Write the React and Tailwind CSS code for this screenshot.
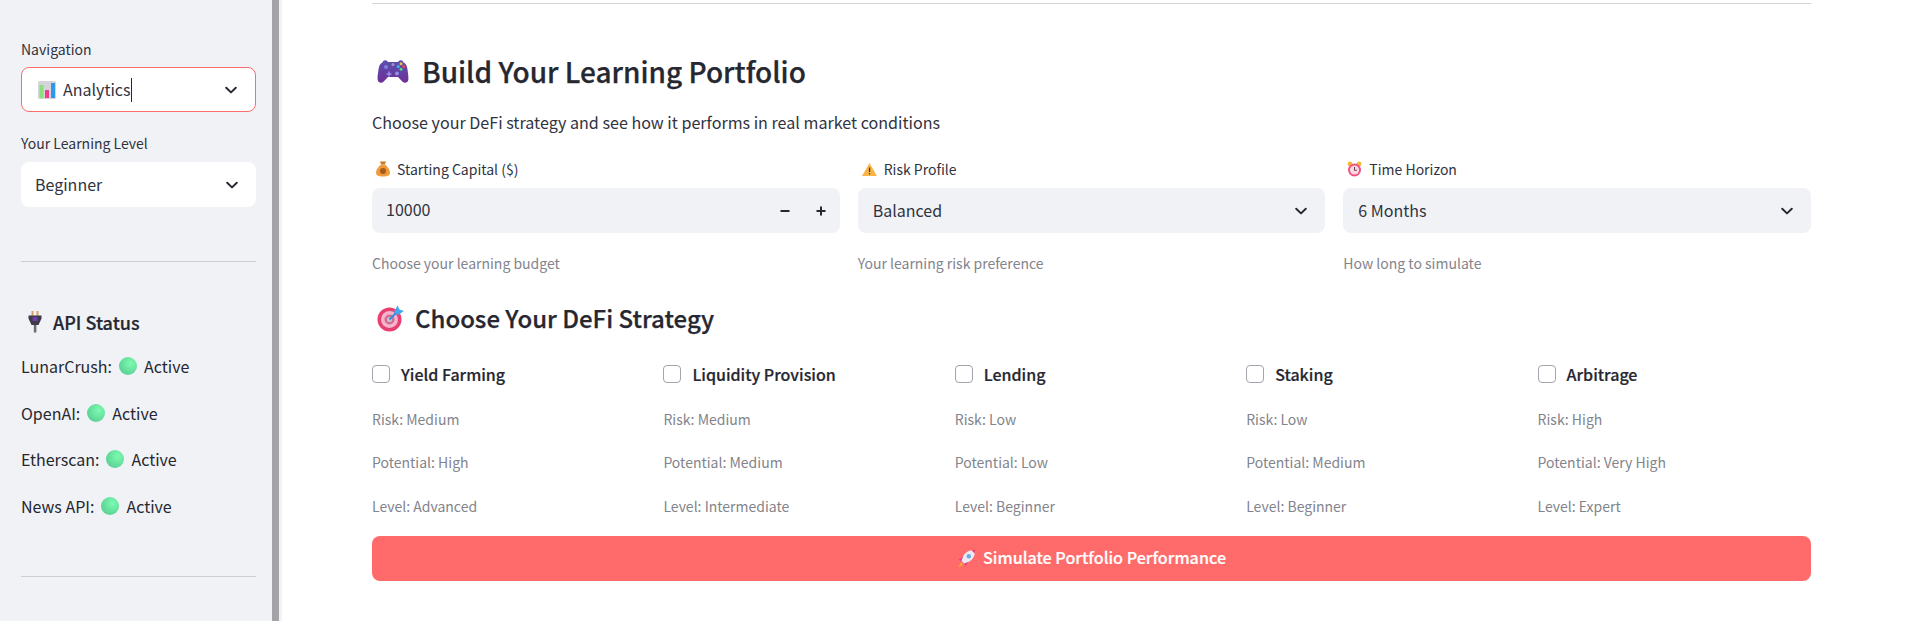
import React from 'react';

const FONT = '"Noto Sans CJK JP", "Noto Sans", sans-serif';

const Chevron = () => (
  <svg width="16" height="16" viewBox="0 0 16 16" fill="none" stroke="#262730" strokeWidth="2" strokeLinecap="round" strokeLinejoin="round">
    <path d="M3.2 5.8 8 10.400l4.800-4.600" />
  </svg>
);

const BarChart = () => (
  <svg width="18" height="18" viewBox="0 0 18 18" className="shrink-0">
    <rect x="0" y="0" width="18" height="18" rx="1.500" fill="#d4d4da" />
    <rect x="1.500" y="4" width="4" height="13" fill="#8ce07c" />
    <rect x="7" y="9" width="4" height="8" fill="#ef3d8c" />
    <rect x="13" y="2" width="4" height="15" fill="#2f96ea" />
  </svg>
);

const Plug = () => (
  <svg width="16" height="22" viewBox="0 0 16 22" className="shrink-0">
    <rect x="4.500" y="0" width="2" height="5" fill="#d9a066" />
    <rect x="9.500" y="0" width="2" height="5" fill="#d9a066" />
    <path d="M1.500 4.500h13v3l-3 6.500h-7l-3-6.500z" fill="#3f3a4a" />
    <rect x="5.500" y="6" width="5" height="4" fill="#6b3fa8" />
    <rect x="6.800" y="14" width="2.600" height="7.500" fill="#6d6d7a" />
  </svg>
);

const GreenDot = () => (
  <span className="block w-[18px] h-[18px] rounded-full shrink-0 bg-[radial-gradient(circle_at_65%_35%,#7dfbb0,#4fc48c)]" />
);

const Gamepad = () => (
  <svg width="32" height="25" viewBox="0 0 32 25" className="shrink-0">
    <defs>
      <linearGradient id="pad" x1="0" y1="0" x2="0" y2="1">
        <stop offset="0" stopColor="#5a4fb0" />
        <stop offset="1" stopColor="#6f2f96" />
      </linearGradient>
    </defs>
    <path d="M5.500 3.500C6 1 9.500.5 11 3h10c1.500-2.500 5-2 5.500.5 2.500 1 3.500 3.500 4 7 .5 4 1.300 8 .8 10.500-.6 3-4 3.500-6 1.500L21 18H11l-4.300 4.500c-2 2-5.400 1.500-6-1.500-.5-2.500.3-6.500.8-10.500.5-3.500 1.500-6 4-7z" fill="url(#pad)" />
    <circle cx="9" cy="8" r="2" fill="#7f7fdc" />
    <circle cx="16" cy="5.500" r="1.500" fill="#9a9ab8" />
    <path d="M12 12.500v5M9.500 15h5" stroke="#8f8fe8" strokeWidth="1.600" />
    <circle cx="24" cy="4.800" r="1.500" fill="#f4c430" />
    <circle cx="26.800" cy="7.500" r="1.500" fill="#ef4444" />
    <circle cx="21.200" cy="7.500" r="1.500" fill="#38b6ef" />
    <circle cx="24" cy="10.200" r="1.500" fill="#4ade80" />
    <circle cx="20" cy="14.500" r="2" fill="#8f8fe8" />
  </svg>
);

const MoneyBag = () => (
  <svg width="14" height="16" viewBox="0 0 14 16" className="shrink-0">
    <path d="M4 .5h6L8.800 3.500H5.200z" fill="#c57a2c" />
    <path d="M5 3.500h4c2.500 2 5 5 5 8 0 3-2.500 4-7 4s-7-1-7-4c0-3 2.500-6 5-8z" fill="#ef9b3a" />
    <circle cx="7" cy="10" r="3" fill="#a65a20" />
  </svg>
);

const Warning = () => (
  <svg width="15" height="13" viewBox="0 0 15 13" className="shrink-0">
    <path d="M7.500 0 15 13H0z" fill="#fbb545" />
    <rect x="6.900" y="4.500" width="1.300" height="4.500" fill="#4a3a20" />
    <rect x="6.900" y="10" width="1.300" height="1.400" fill="#4a3a20" />
  </svg>
);

const Clock = () => (
  <svg width="15" height="16" viewBox="0 0 15 16" className="shrink-0">
    <circle cx="3" cy="3" r="2.400" fill="#f4b93c" />
    <circle cx="12" cy="3" r="2.400" fill="#f4b93c" />
    <circle cx="7.500" cy="9" r="6.500" fill="#f0507e" />
    <circle cx="7.500" cy="9" r="4.600" fill="#fbd5e0" />
    <path d="M7.500 6v3.300h2.300" stroke="#5a4450" strokeWidth="1" fill="none" />
  </svg>
);

const Target = () => (
  <svg width="28" height="28" viewBox="0 0 28 28" className="shrink-0">
    <circle cx="12.500" cy="15.500" r="12" fill="#e83e72" />
    <circle cx="12.500" cy="15.500" r="8.500" fill="#f4b6cc" />
    <circle cx="12.500" cy="15.500" r="5" fill="#d96a94" />
    <circle cx="12.500" cy="15.500" r="2.600" fill="#c9c3cc" />
    <path d="M12.500 15.500 22 6" stroke="#2f8fe0" strokeWidth="2.200" />
    <path d="M17 8 20.500 1.500l2 4 4.500 1.500-6 4z" fill="#43a8f0" />
  </svg>
);

const Rocket = () => (
  <svg width="19" height="19" viewBox="0 0 19 19" className="shrink-0">
    <path d="M4 13 1 18.500l5.500-2.500z" fill="#f4a13c" />
    <path d="M1.500 10.500 7 7l5 5-3.500 5.500-1.500-3z" fill="#ec3f86" />
    <path d="M4.500 12 6.500 6.500C9 3 12.500.8 18 1c.2 5.500-2 9-5.500 11.500L7 14.500z" fill="#ece9f0" />
    <path d="M14.500 1.200c1.200-.2 2.500-.3 3.500-.2 0 1 0 2.400-.3 3.500z" fill="#ec3f70" />
    <circle cx="11.800" cy="7.200" r="2.200" fill="#6aa8ea" />
  </svg>
);

const StepButton = ({ d }) => (
  <svg width="16" height="16" viewBox="0 0 16 16" fill="none" stroke="#262730" strokeWidth="2">
    <path d={d} />
  </svg>
);

const SideSelect = ({ focused, children }) => (
  <div className={`flex items-center justify-between h-[45px] bg-white rounded-lg pr-[16px] ${focused ? 'border border-[#ff6c6c]' : ''}`}>
    {children}
    <Chevron />
  </div>
);

const ApiRow = ({ name }) => (
  <div className="flex items-center h-[24px] text-[16px] leading-[24px] text-[#262730]">
    <span>{name}:</span>
    <span className="ml-[7px] mr-[7px]"><GreenDot /></span>
    <span>Active</span>
  </div>
);

const Sidebar = () => (
  <aside className="w-[272px] shrink-0 bg-[#f0f2f6] pl-[21px] pr-[16px] pt-[40px]">
    <div className="text-[14px] leading-[18px] text-[#31333f] h-[27px]">Navigation</div>
    <SideSelect focused>
      <div className="flex items-center pl-[16px] text-[16px] text-[#31333f]">
        <BarChart />
        <span className="ml-[7px] -mt-[2px]">Analytics</span>
        <span className="w-px h-[24px] bg-[#262730] ml-[1px]" />
      </div>
    </SideSelect>
    <div className="text-[14px] leading-[18px] text-[#31333f] h-[28px] mt-[22px]">Your Learning Level</div>
    <SideSelect>
      <span className="pl-[14px] -mt-[2px] text-[16px] text-[#31333f]">Beginner</span>
    </SideSelect>
    <div className="border-t border-[#cdced3] mt-[54px]" />
    <div className="flex items-center h-[24px] mt-[48px] pl-[6px] gap-[10px]">
      <Plug />
      <h3 className="text-[18px] font-medium text-[#262730] leading-[24px] [-webkit-text-stroke:0.2px_#262730]">API Status</h3>
    </div>
    <div className="flex flex-col gap-[22.670px] mt-[20px]">
      <ApiRow name="LunarCrush" />
      <ApiRow name="OpenAI" />
      <ApiRow name="Etherscan" />
      <ApiRow name="News API" />
    </div>
    <div className="border-t border-[#cdced3] mt-[58px]" />
  </aside>
);

const Field = ({ icon, label, help, children }) => (
  <div className="flex-1 min-w-0">
    <div className="flex items-center h-[18px] gap-[7px] pl-[4px] text-[14px] leading-[18px] text-[#31333f]">
      {icon}
      <span>{label}</span>
    </div>
    <div className="flex items-center justify-between h-[45px] mt-[10px] bg-[#f0f2f6] rounded-lg pl-[15px] pr-[16px] text-[16px] text-[#31333f]">
      {children}
    </div>
    <div className="text-[14px] leading-[18px] text-[#83848c] mt-[21px]">{help}</div>
  </div>
);

const strategies = [
  { name: 'Yield Farming', risk: 'Medium', potential: 'High', level: 'Advanced' },
  { name: 'Liquidity Provision', risk: 'Medium', potential: 'Medium', level: 'Intermediate' },
  { name: 'Lending', risk: 'Low', potential: 'Low', level: 'Beginner' },
  { name: 'Staking', risk: 'Low', potential: 'Medium', level: 'Beginner' },
  { name: 'Arbitrage', risk: 'High', potential: 'Very High', level: 'Expert' },
];

const Strategy = ({ s }) => (
  <div>
    <div className="flex items-center h-[20px] gap-[11px]">
      <span className="w-[18px] h-[18px] border border-[#a3a5ad] rounded-[4px] bg-white" />
      <span className="text-[16px] font-medium text-[#262730] leading-[20px] [-webkit-text-stroke:0.2px_#262730]">{s.name}</span>
    </div>
    <div className="flex flex-col gap-[25.400px] mt-[26px] text-[14px] leading-[18px] text-[#83848c]">
      <div>Risk: {s.risk}</div>
      <div>Potential: {s.potential}</div>
      <div>Level: {s.level}</div>
    </div>
  </div>
);

export default function App() {
  return (
    <div className="flex h-screen overflow-hidden bg-white" style={{ fontFamily: FONT }}>
      <Sidebar />
      <div className="w-[7px] shrink-0 bg-[#a3a3a8]" />
      <div className="w-[3px] shrink-0 bg-[#f0f2f6]" />
      <main className="flex-1 min-w-0 pl-[90px] pr-[101px]">
        <div className="border-t border-[#d5d6da] mt-[3px]" />
        <div className="flex items-center h-[40px] mt-[47px] pl-[5px] gap-[13px]">
          <Gamepad />
          <h2 className="text-[28px] font-medium text-[#262730] leading-[40px] [-webkit-text-stroke:0.25px_#262730]">Build Your Learning Portfolio</h2>
        </div>
        <p className="text-[16.100px] leading-[24px] text-[#31333f] mt-[19px]">Choose your DeFi strategy and see how it performs in real market conditions</p>
        <div className="flex gap-[18px] mt-[26px]">
          <Field icon={<MoneyBag />} label="Starting Capital ($)" help="Choose your learning budget">
            <span className="-ml-px -mt-[3px]">10000</span>
            <div className="flex items-center gap-[20px] -mr-[5px]">
              <StepButton d="M3.500 8h9" />
              <StepButton d="M3.500 8h9M8 3.500v9" />
            </div>
          </Field>
          <Field icon={<Warning />} label="Risk Profile" help="Your learning risk preference">
            <span className="-mt-[2px]">Balanced</span>
            <Chevron />
          </Field>
          <Field icon={<Clock />} label="Time Horizon" help="How long to simulate">
            <span className="-mt-[2px]">6 Months</span>
            <Chevron />
          </Field>
        </div>
        <div className="flex items-center h-[34px] mt-[29px] pl-[5px] gap-[10px]">
          <Target />
          <h3 className="text-[24px] font-medium text-[#262730] leading-[34px] [-webkit-text-stroke:0.25px_#262730]">Choose Your DeFi Strategy</h3>
        </div>
        <div className="grid grid-cols-5 gap-[18px] mt-[29px]">
          {strategies.map((s) => <Strategy key={s.name} s={s} />)}
        </div>
        <button className="flex items-center justify-center gap-[7px] w-full h-[45px] mt-[21px] bg-[#ff6b6b] rounded-lg text-[16.150px] font-medium text-white [-webkit-text-stroke:0.2px_#ffffff]">
          <Rocket />
          <span className="-mt-[2px]">Simulate Portfolio Performance</span>
        </button>
      </main>
    </div>
  );
}
